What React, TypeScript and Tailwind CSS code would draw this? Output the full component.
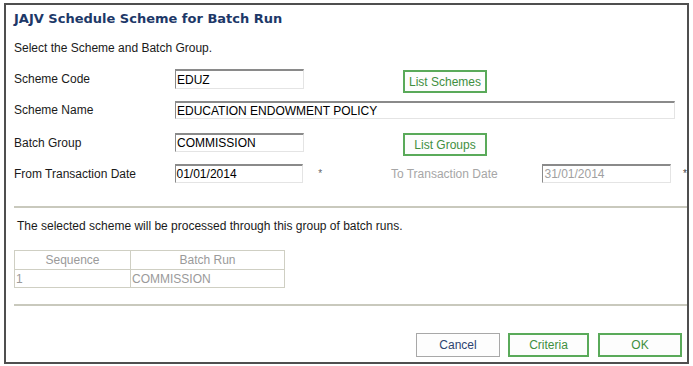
import React from "react";

const sans = { fontFamily: '"Liberation Sans", Arial, sans-serif' };

function Field({ value, w, h, disabled }: { value: string; w: string; h: string; disabled?: boolean }) {
  return (
    <div
      className={`${w} ${h} bg-white border-t-2 border-l border-t-[#8a8a8a] border-l-[#8a8a8a] border-b border-r border-b-[#e4e4e4] border-r-[#e4e4e4] flex items-center pl-[1px] text-[12px] leading-none ${disabled ? "text-[#a0a0a0]" : "text-black"}`}
      style={sans}
    >
      {value}
    </div>
  );
}

function Btn({ label, w, h, green, className = "" }: { label: string; w: string; h: string; green?: boolean; className?: string }) {
  return (
    <div
      className={`${w} ${h} flex items-center justify-center text-[12px] ${green ? "border-2 border-[#5aaa5a] text-[#3f8f3f]" : "border border-[#a8a8a8] text-[#2d4470]"} bg-[#fdfdfd] ${className}`}
      style={sans}
    >
      {label}
    </div>
  );
}

export default function App() {
  return (
    <div className="w-[693px] h-[366px] bg-white pt-[3px] pl-[4px]" style={sans}>
      <div className="w-[685px] h-[361px] border-2 border-[#4f4f4f] flex flex-col text-[12px] text-[#1a1a1a]">
        <div
          className="pl-[8px] mt-[4px] h-[20px] flex items-center text-[13px] font-bold text-[#1d3868]"
          style={{ fontFamily: '"DejaVu Sans", Verdana, sans-serif' }}
        >
          JAJV Schedule Scheme for Batch Run
        </div>
        <div className="pl-[8px] mt-[11px] h-[16px] flex items-center">Select the Scheme and Batch Group.</div>

        <div className="mt-[13px] flex items-start">
          <div className="pl-[8px] w-[169px] h-[20px] flex items-center">Scheme Code</div>
          <Field value="EDUZ" w="w-[129px]" h="h-[20px]" />
          <Btn label="List Schemes" w="w-[84px]" h="h-[23px]" green className="ml-[99px] mt-[1px]" />
        </div>

        <div className="mt-[8px] flex items-start">
          <div className="pl-[8px] w-[169px] h-[18px] flex items-center">Scheme Name</div>
          <Field value="EDUCATION ENDOWMENT POLICY" w="w-[500px]" h="h-[18px]" />
        </div>

        <div className="mt-[14px] flex items-start">
          <div className="pl-[8px] w-[169px] h-[19px] flex items-center">Batch Group</div>
          <Field value="COMMISSION" w="w-[129px]" h="h-[19px]" />
          <Btn label="List Groups" w="w-[84px]" h="h-[23px]" green className="ml-[99px]" />
        </div>

        <div className="mt-[8px] flex items-start">
          <div className="pl-[8px] w-[169px] h-[19px] flex items-center">From Transaction Date</div>
          <Field value="01/01/2014" w="w-[129px]" h="h-[19px]" />
          <div className="ml-[15px] w-[73px] h-[19px] flex items-center text-[10px] text-[#666]">*</div>
          <div className="w-[152px] h-[19px] flex items-center text-[#a6a6a6]">To Transaction Date</div>
          <Field value="31/01/2014" w="w-[129px]" h="h-[19px]" disabled />
          <div className="ml-[12px] h-[19px] flex items-center text-[10px] text-[#444]">*</div>
        </div>

        <div className="mt-[23px] ml-[8px] h-[2px] bg-[#c9c9bd]" />

        <div className="mt-[10px] pl-[11px] h-[16px] flex items-center">
          The selected scheme will be processed through this group of batch runs.
        </div>

        <div className="mt-[16px] ml-[8px] w-[271px] border border-[#cfcfc3] text-[12px] text-[#9a9a9a]">
          <div className="flex h-[19px] border-b border-[#cfcfc3]">
            <div className="w-[116px] border-r border-[#cfcfc3] flex items-center justify-center">Sequence</div>
            <div className="flex-1 flex items-center justify-center">Batch Run</div>
          </div>
          <div className="flex h-[17px]">
            <div className="w-[116px] border-r border-[#cfcfc3] flex items-center pl-[1px]">1</div>
            <div className="flex-1 flex items-center pl-[1px]">COMMISSION</div>
          </div>
        </div>

        <div className="mt-[16px] ml-[8px] h-[2px] bg-[#c9c9bd]" />

        <div className="mt-[27px] flex justify-end pr-[5px]">
          <Btn label="Cancel" w="w-[84px]" h="h-[24px]" />
          <Btn label="Criteria" w="w-[81px]" h="h-[24px]" green className="ml-[8px]" />
          <Btn label="OK" w="w-[84px]" h="h-[24px]" green className="ml-[9px]" />
        </div>
      </div>
    </div>
  );
}
